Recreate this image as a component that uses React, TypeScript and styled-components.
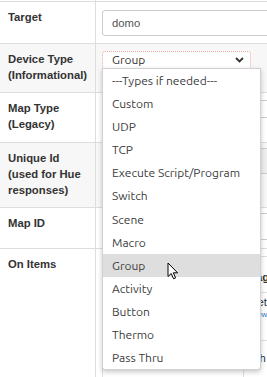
import React from "react";
import styled, { createGlobalStyle } from "styled-components";

const Global = createGlobalStyle`
  html, body { margin: 0; padding: 0; background: #fff; overflow: hidden; }
  * { box-sizing: border-box; }
  body {
    font-family: "Liberation Sans", Arial, sans-serif;
    font-size: 11.3px;
    line-height: 16px;
    color: #333;
  }
`;

const Page = styled.div`
  position: relative;
  width: 267px;
  height: 377px;
  overflow: hidden;
`;

const Table = styled.div`
  width: 440px;
  display: flex;
  flex-direction: column;
`;

const Row = styled.div<{ $h?: number; $striped?: boolean }>`
  display: grid;
  grid-template-columns: 96px 1fr;
  height: ${(p) => (p.$h ? `${p.$h}px` : "auto")};
  border-bottom: 1px solid #ddd;
  background: ${(p) => (p.$striped ? "#f7f7f7" : "#fff")};
`;

const LastRow = styled(Row)`
  border-bottom: none;
  min-height: 140px;
`;

const LabelCell = styled.div`
  border-right: 1px solid #ddd;
  padding: 7px 6px 0 8px;
  font-weight: bold;
  color: #333;
`;

const ValueCell = styled.div<{ $pt: number }>`
  padding: ${(p) => p.$pt}px 6px 0 6px;
`;

const TextInput = styled.div<{ $h: number; $w?: number; $readonly?: boolean }>`
  height: ${(p) => p.$h}px;
  width: ${(p) => p.$w ?? 320}px;
  border: 1px solid #ccc;
  border-radius: 3px;
  background: ${(p) => (p.$readonly ? "#eee" : "#fff")};
  padding: 0 9px;
  display: flex;
  align-items: center;
  color: #555;
`;

const SelectBox = styled.div<{ $w: number; $focus?: boolean }>`
  width: ${(p) => p.$w}px;
  height: 18px;
  border: 1px ${(p) => (p.$focus ? "dotted #eea79c" : "solid #ccc")};
  border-radius: 3px;
  background: #fff;
  display: flex;
  align-items: center;
  justify-content: space-between;
  padding: 0 6px 0 9px;
  font-family: "Ubuntu", "Lato", "Open Sans", sans-serif;
  font-size: 12px;
  color: #333;
`;

const NestedTable = styled.div`
  width: 320px;
  border: 1px solid #ddd;
  display: flex;
  flex-direction: column;
`;

const NestedRow = styled.div<{ $h: number; $head?: boolean }>`
  display: grid;
  grid-template-columns: 141px 1fr;
  height: ${(p) => p.$h}px;
  border-bottom: 1px solid #ddd;
  font-weight: ${(p) => (p.$head ? "bold" : "normal")};
`;

const NestedCell = styled.div<{ $pt?: number }>`
  border-right: 1px solid #ddd;
  padding: ${(p) => p.$pt ?? 8}px 6px 0 6px;
  color: #333;
`;

const LinkText = styled.div`
  color: #337ab7;
  font-size: 8px;
  line-height: 10px;
`;

const Dropdown = styled.div`
  position: absolute;
  left: 102px;
  top: 68px;
  width: 159px;
  height: 302px;
  background: #fff;
  border: 1px solid rgba(0, 0, 0, 0.18);
  box-shadow: 0 2px 5px rgba(0, 0, 0, 0.22);
  border-radius: 0 0 3px 3px;
  font-family: "Ubuntu", "Lato", "Open Sans", sans-serif;
  font-size: 12px;
  color: #3c3c3c;
`;

const Option = styled.div<{ $active?: boolean }>`
  height: 23.17px;
  display: flex;
  align-items: center;
  padding-left: 9px;
  white-space: nowrap;
  background: ${(p) => (p.$active ? "#dedede" : "transparent")};
`;

const Cursor = styled.svg`
  position: absolute;
  left: 167px;
  top: 262px;
`;

const options = [
  "---Types if needed---",
  "Custom",
  "UDP",
  "TCP",
  "Execute Script/Program",
  "Switch",
  "Scene",
  "Macro",
  "Group",
  "Activity",
  "Button",
  "Thermo",
  "Pass Thru",
];

const Chevron = () => (
  <svg width="9" height="6" viewBox="0 0 9 6">
    <path d="M1 1 L4.5 4.5 L8 1" fill="none" stroke="#333" strokeWidth="1.8" />
  </svg>
);

export default function App() {
  return (
    <Page>
      <Global />
      <Table>
        <Row $h={2}>
          <LabelCell />
          <div />
        </Row>
        <Row $h={42}>
          <LabelCell>Target</LabelCell>
          <ValueCell $pt={8}>
            <TextInput $h={26}>domo</TextInput>
          </ValueCell>
        </Row>
        <Row $h={49} $striped>
          <LabelCell>
            Device Type
            <br />
            (Informational)
          </LabelCell>
          <ValueCell $pt={7}>
            <SelectBox $w={149} $focus>
              <span>Group</span>
              <Chevron />
            </SelectBox>
          </ValueCell>
        </Row>
        <Row $h={50}>
          <LabelCell>
            Map Type
            <br />
            (Legacy)
          </LabelCell>
          <ValueCell $pt={7}>
            <SelectBox $w={320} />
          </ValueCell>
        </Row>
        <Row $h={65} $striped>
          <LabelCell>
            Unique Id
            <br />
            (used for Hue
            <br />
            responses)
          </LabelCell>
          <ValueCell $pt={5}>
            <TextInput $h={26} $readonly />
          </ValueCell>
        </Row>
        <Row $h={41}>
          <LabelCell>Map ID</LabelCell>
          <ValueCell $pt={5}>
            <TextInput $h={27} />
          </ValueCell>
        </Row>
        <LastRow>
          <LabelCell>On Items</LabelCell>
          <ValueCell $pt={7}>
            <NestedTable>
              <NestedRow $h={36} $head>
                <NestedCell $pt={12} />
                <NestedCell $pt={12}>Tag</NestedCell>
              </NestedRow>
              <NestedRow $h={48}>
                <NestedCell $pt={4}>
                  <TextInput $h={26} $w={128} />
                </NestedCell>
                <NestedCell $pt={1}>
                  Setting
                  <LinkText>www</LinkText>
                </NestedCell>
              </NestedRow>
              <NestedRow $h={40}>
                <NestedCell $pt={9} />
                <NestedCell $pt={9}>hth</NestedCell>
              </NestedRow>
            </NestedTable>
          </ValueCell>
        </LastRow>
      </Table>
      <Dropdown>
        {options.map((o) => (
          <Option key={o} $active={o === "Group"}>
            {o}
          </Option>
        ))}
      </Dropdown>
      <Cursor width="12" height="18" viewBox="0 0 12 18">
        <path
          d="M1 1 L1 14.5 L4.2 11.6 L6.6 16.8 L8.6 15.9 L6.3 10.8 L10.6 10.8 Z"
          fill="#fff"
          stroke="#000"
          strokeWidth="1"
          strokeLinejoin="round"
        />
      </Cursor>
    </Page>
  );
}
